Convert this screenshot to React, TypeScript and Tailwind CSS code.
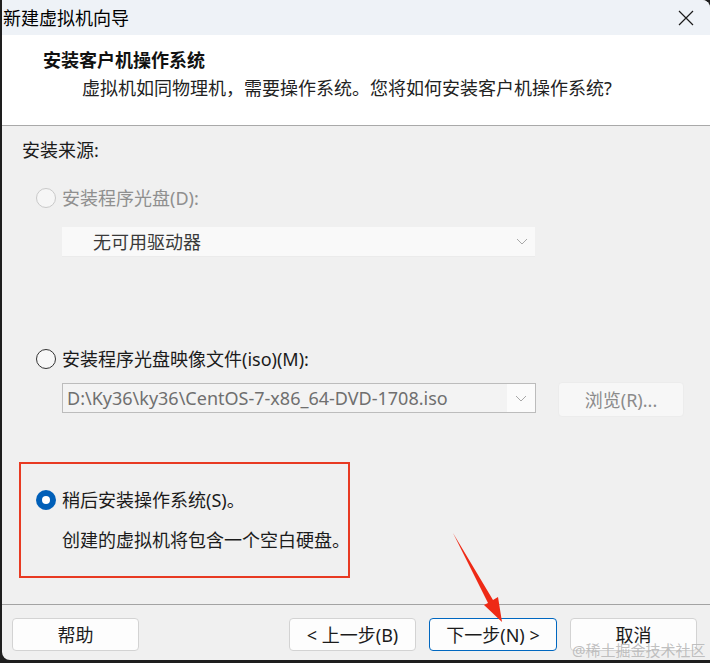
const FONT = "font-['Noto_Sans','Noto_Sans_CJK_SC',sans-serif]";

function Chevron({ className = "" }: { className?: string }) {
  return (
    <svg width="12" height="7" viewBox="0 0 12 7" className={className} aria-hidden="true">
      <path d="M1 1l5 5 5-5" fill="none" stroke="#a8a8a8" strokeWidth="1" />
    </svg>
  );
}

function CloseIcon() {
  return (
    <svg width="16" height="16" viewBox="0 0 16 16" aria-hidden="true">
      <path d="M1 1l14 14M15 1L1 15" fill="none" stroke="#1b1b1b" strokeWidth="1.2" />
    </svg>
  );
}

function Radio({ checked = false, disabled = false }: { checked?: boolean; disabled?: boolean }) {
  if (checked) {
    return (
      <span className="flex h-[20px] w-[20px] shrink-0 items-center justify-center rounded-full bg-[#005fb8]">
        <span className="h-[8px] w-[8px] rounded-full bg-white" />
      </span>
    );
  }
  return (
    <span
      className={
        disabled
          ? "h-[20px] w-[20px] shrink-0 rounded-full border border-[#c9c9c9] bg-[#f6f6f6]"
          : "h-[20px] w-[20px] shrink-0 rounded-full border border-[#333333] bg-[#f7f7f7]"
      }
    />
  );
}

function FooterButton({ label, primary = false }: { label: string; primary?: boolean }) {
  return (
    <button
      className={
        primary
          ? "flex h-[33px] w-[128px] items-center justify-center rounded-[4px] border border-[#0067c0] bg-[#fdfdfd] text-[18px] leading-[24px] text-[#1b1b1b]"
          : "flex h-[33px] w-[127px] items-center justify-center rounded-[4px] border border-[#d3d3d3] bg-[#fdfdfd] text-[18px] leading-[24px] text-[#1b1b1b]"
      }
    >
      {label}
    </button>
  );
}

export default function App() {
  return (
    <div className={`relative h-[663px] w-[710px] overflow-hidden bg-[#1e1e1e] ${FONT}`}>
      <div className="ml-[2px] flex h-[660px] flex-col overflow-hidden rounded-tr-[8px] rounded-bl-[8px] bg-[#f0f0f0]">
        {/* title bar */}
        <div className="flex h-[35px] shrink-0 items-center justify-between bg-[#eef2f7] pl-[1px] pr-[16px]">
          <span className="text-[18px] leading-[24px] text-black">新建虚拟机向导</span>
          <CloseIcon />
        </div>

        {/* header */}
        <div className="h-[91px] shrink-0 border-b border-[#a9a9a9] bg-white pl-[41px] pt-[13px]">
          <h1 className="text-[18px] font-bold leading-[24px] text-[#111111]">安装客户机操作系统</h1>
          <p className="ml-[39px] mt-[4px] text-[18px] leading-[24px] text-[#222222]">
            虚拟机如同物理机，需要操作系统。您将如何安装客户机操作系统?
          </p>
        </div>

        {/* body */}
        <div className="flex-1 pt-[12px] text-[18px] leading-[24px]">
          <div className="ml-[20px] text-[#1b1b1b]">安装来源:</div>

          <div className="ml-[34px] mt-[24px] flex items-center gap-[6px]">
            <Radio disabled />
            <span className="text-[#8f8f8f]">安装程序光盘(D):</span>
          </div>
          <div className="ml-[60px] mt-[17px] flex h-[30px] w-[473px] items-center justify-between border-b border-[#ebebeb] bg-[#f9f9f9] pl-[31px] pr-[7px]">
            <span className="text-[#3a3a3a]">无可用驱动器</span>
            <Chevron />
          </div>

          <div className="ml-[34px] mt-[90px] flex items-center gap-[6px]">
            <Radio />
            <span className="text-[#1b1b1b]">安装程序光盘映像文件(iso)(M):</span>
          </div>
          <div className="ml-[60px] mt-[11px] flex items-start gap-[22px]">
            <div className="mt-[1px] flex h-[30px] w-[474px] border border-[#bcbcbc] bg-[#fbfbfb]">
              <div className="flex flex-1 items-center bg-[#f3f3f3] pl-[4px] text-[#6f6f6f]">
                D:\Ky36\ky36\CentOS-7-x86_64-DVD-1708.iso
              </div>
              <div className="flex w-[28px] items-center justify-center">
                <Chevron />
              </div>
            </div>
            <button className="flex h-[35px] w-[126px] items-center justify-center rounded-[4px] border border-[#ececec] bg-[#f7f7f7] text-[18px] text-[#8b8b8b]">
              浏览(R)...
            </button>
          </div>

          <div className="ml-[17px] mt-[45px] h-[116px] w-[331px] border-2 border-[#e83a22] pl-[15px] pt-[24px]">
            <div className="flex items-center gap-[6px]">
              <Radio checked />
              <span className="whitespace-nowrap text-[#1b1b1b]">稍后安装操作系统(S)。</span>
            </div>
            <div className="ml-[26px] mt-[16px] whitespace-nowrap text-[#1b1b1b]">
              创建的虚拟机将包含一个空白硬盘。
            </div>
          </div>
        </div>

        {/* footer */}
        <div className="flex h-[56px] shrink-0 items-start border-t border-[#a3a3a3] pl-[10px] pr-[13px] pt-[13px]">
          <FooterButton label="帮助" />
          <div className="ml-auto flex gap-[13px]">
            <FooterButton label="< 上一步(B)" />
            <FooterButton label="下一步(N) >" primary />
            <FooterButton label="取消" />
          </div>
        </div>
      </div>

      {/* annotation arrow */}
      <svg className="pointer-events-none absolute left-0 top-0" width="710" height="663" aria-hidden="true">
        <polygon points="453,533 493,600 498,597 502,622 484,605 488,603" fill="#ee2a16" />
      </svg>

      {/* watermark */}
      <span className="pointer-events-none absolute left-[572px] top-[641px] text-[15px] leading-[18px] text-[#b8b8b8]/90">
        @稀土掘金技术社区
      </span>
    </div>
  );
}
